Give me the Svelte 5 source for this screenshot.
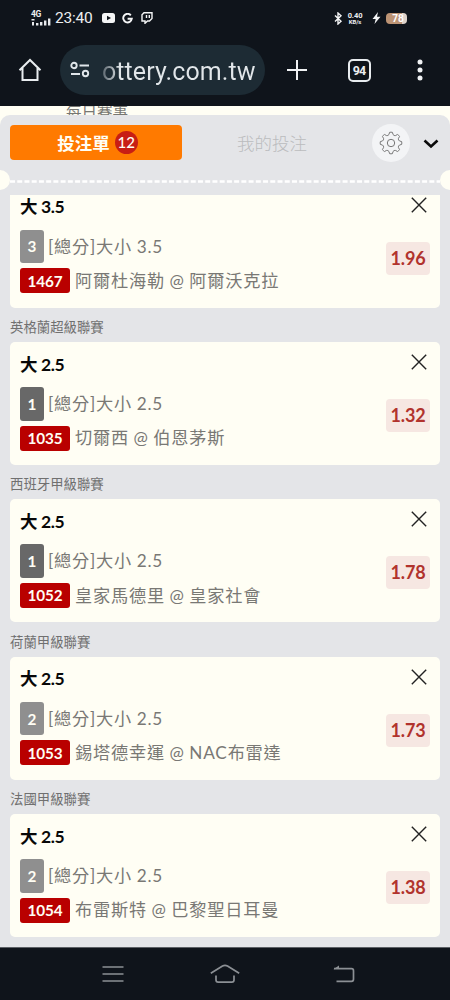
<script>
  const bets = [
    { league: "", pick: "3.5", tag: "3", id: "1467", teams: "阿爾杜海勒 @ 阿爾沃克拉", odds: "1.96" },
    { league: "英格蘭超級聯賽", pick: "2.5", tag: "1", id: "1035", teams: "切爾西 @ 伯恩茅斯", odds: "1.32" },
    { league: "西班牙甲級聯賽", pick: "2.5", tag: "1", id: "1052", teams: "皇家馬德里 @ 皇家社會", odds: "1.78" },
    { league: "荷蘭甲級聯賽", pick: "2.5", tag: "2", id: "1053", teams: "錫塔德幸運 @ NAC布雷達", odds: "1.73" },
    { league: "法國甲級聯賽", pick: "2.5", tag: "2", id: "1054", teams: "布雷斯特 @ 巴黎聖日耳曼", odds: "1.38" },
  ];

  // eight-toothed outline for the settings button
  const gear = Array.from({ length: 8 }, (_, i) => {
    const point = (r, deg) => {
      const a = ((i * 45 + deg) * Math.PI) / 180;
      return `${(12 + r * Math.sin(a)).toFixed(2)} ${(12 - r * Math.cos(a)).toFixed(2)}`;
    };
    return `${i ? "L" : "M"}${point(8.8, -13)}L${point(10.7, -8)}Q${point(11.1, 0)} ${point(10.7, 8)}L${point(8.8, 13)}Q${point(7.6, 22.5)} ${point(8.8, 32)}`;
  }).join("") + "Z";
</script>

<div class="screen">
  <header>
    <div class="status">
      <div class="signal">
        <span>4G</span>
        <svg width="20" height="8" viewBox="0 0 20 8" fill="#e8eaed">
          <path d="M.5 1h3v1.500h-3zM1 4h2v3.500H1zM5 5h2.400v2.500H5zM9 4h2.400v3.500H9zM13 2.500h2.400v5H13zM17 .5h2.400v7H17z" />
        </svg>
      </div>
      <span class="time">23:40</span>
      <svg class="yt" width="13" height="10" viewBox="0 0 13 10">
        <rect width="13" height="10" rx="2.500" fill="#f4f5f6" />
        <path d="M5 2.800 9 5 5 7.200z" fill="#0f141b" />
      </svg>
      <svg class="google" width="11" height="11" viewBox="0 0 11 11" fill="none" stroke="#f4f5f6" stroke-width="1.900">
        <path d="M8.800 2.300A4.300 4.300 0 1 0 9.800 5.700H5.600" />
      </svg>
      <svg class="twitch" width="12" height="12" viewBox="0 0 12 12" fill="none" stroke="#f4f5f6" stroke-width="1.400">
        <path d="M3 .8h8v5.700L8.500 9H6.500L4 11.300V9H1V2.800zM5.500 3v3M8.300 3v3" />
      </svg>
      <div class="status-right">
        <svg width="9" height="13" viewBox="0 0 9 13" fill="none" stroke="#f4f5f6" stroke-width="1.400">
          <path d="m1 3.500 6 5.800-3 2.700V1l3 2.700-6 5.800" />
        </svg>
        <div class="rate"><span>0.40</span><span>KB/s</span></div>
        <svg class="bolt" width="9" height="12" viewBox="0 0 9 12" fill="#f4f5f6">
          <path d="M6 0 .5 7h3.200L2.500 12 8.500 4.800H5z" />
        </svg>
        <span class="battery">78</span>
      </div>
    </div>
    <div class="toolbar">
      <svg class="home" width="24" height="24" viewBox="0 0 24 24" fill="none" stroke="#e8ecef" stroke-width="2">
        <path d="M1.500 12.300 12 2l10.500 10.300M4.500 10v12h15V10" />
      </svg>
      <div class="address">
        <svg width="20" height="18" viewBox="0 0 20 18" fill="none" stroke="#e0e6ea" stroke-width="1.900">
          <circle cx="4" cy="4.500" r="2.700" /><path d="M9.500 4.500H19M1 13h9" /><circle cx="15.500" cy="12.500" r="2.700" />
        </svg>
        <span class="url">ottery.com.tw</span>
      </div>
      <svg class="plus" width="20" height="20" viewBox="0 0 20 20" stroke="#f0f2f4" stroke-width="2">
        <path d="M10 0v20M0 10h20" />
      </svg>
      <span class="tabs-count">94</span>
      <svg class="dots" width="6" height="22" viewBox="0 0 6 22" fill="#f0f2f4">
        <circle cx="3" cy="3" r="2.500" /><circle cx="3" cy="11" r="2.500" /><circle cx="3" cy="19" r="2.500" />
      </svg>
    </div>
  </header>

  <div class="behind"><span>每日賽事</span></div>

  <main>
    <div class="panel-head">
      <button class="slip">投注單<span class="count">12</span></button>
      <button class="mine">我的投注</button>
      <button class="settings" aria-label="設定">
        <svg width="24" height="24" viewBox="0 0 24 24" fill="none" stroke="#777" stroke-width="1">
          <path d={gear} /><circle cx="12" cy="12" r="3.700" />
        </svg>
      </button>
      <svg class="chevron" width="16" height="10" viewBox="0 0 16 10" fill="none" stroke="#0b0b0b" stroke-width="2.600">
        <path d="m1.500 1.500 6.500 6 6.500-6" />
      </svg>
    </div>
    <div class="tear">
      <i class="notch"></i>
      <svg height="3" width="430"><line x1="0" x2="430" y1="1.500" y2="1.500" stroke="#fff" stroke-width="2.400" stroke-dasharray="5 2.230" /></svg>
      <i class="notch right"></i>
    </div>

    <div class="list">
      {#each bets as bet}
        {#if bet.league}
          <div class="league">{bet.league}</div>
        {/if}
        <section class="card">
          <div class="info">
            <h3>大 {bet.pick}</h3>
            <div class="row market"><b class="tag" class:dark={bet.tag === "1"}>{bet.tag}</b><span>[總分]大小 {bet.pick}</span></div>
            <div class="row match"><b class="code">{bet.id}</b><span>{bet.teams}</span></div>
          </div>
          <div class="side">
            <svg width="16" height="16" viewBox="0 0 16 16" stroke="#222" stroke-width="1.400">
              <path d="m.8.8 14.400 14.400m0-14.400L.8 15.200" />
            </svg>
            <span class="odds">{bet.odds}</span>
          </div>
        </section>
      {/each}
    </div>
  </main>

  <nav>
    <svg width="22" height="18" viewBox="0 0 22 18" stroke="#8c9095" stroke-width="1.700">
      <path d="M.5 2h21M.5 9h21M.5 16h21" />
    </svg>
    <svg class="nav-home" width="30" height="20" viewBox="0 0 30 20" fill="none" stroke="#8c9095" stroke-width="1.700">
      <path d="M.8 9.300 12.500 2Q15 .6 17.500 2l11.700 7.300M6 11.500V16q0 2.200 2.200 2.200h13.600q2.200 0 2.200-2.200v-4.500" />
    </svg>
    <svg class="nav-back" width="22" height="18" viewBox="0 0 22 18" fill="none" stroke="#8c9095" stroke-width="1.700">
      <path d="M1 3.700h17.500q2 0 2 2v8.600q0 2-2 2H3.500" /><path d="M.3 4.200 6 .6v3z" fill="#8c9095" stroke="none" />
    </svg>
  </nav>
</div>

<style>
  :global(body) {
    background: #0f141b;
  }
  .screen {
    width: 450px;
    height: 1000px;
    overflow: hidden;
    display: flex;
    flex-direction: column;
    font-family: Lato, "Noto Sans CJK TC", sans-serif;
    background: #fffef4;
  }
  svg {
    display: block;
    flex: none;
  }
  button {
    border: 0;
    padding: 0;
    font: inherit;
  }
  header {
    height: 106px;
    flex: none;
    background: #0f141b;
    color: #eceef0;
    font-family: Roboto, sans-serif;
  }
  .status {
    height: 36px;
    display: flex;
    align-items: center;
    padding: 0 43px 0 31px;
  }
  .signal {
    width: 20px;
    margin-right: 4px;
    font-size: 8.500px;
    line-height: 7px;
    font-weight: 700;
    letter-spacing: -0.3px;
  }
  .signal span {
    display: block;
  }
  .time {
    width: 38px;
    font-size: 15.500px;
    font-weight: 400;
    letter-spacing: -0.2px;
  }
  .yt {
    margin-left: 9px;
  }
  .google {
    margin-left: 7px;
  }
  .twitch {
    margin-left: 8px;
  }
  .status-right {
    margin-left: auto;
    display: flex;
    align-items: center;
  }
  .rate {
    width: 16px;
    margin-left: 4px;
    font-size: 7.500px;
    line-height: 7px;
    font-weight: 700;
    text-align: center;
    letter-spacing: -0.1px;
  }
  .rate span {
    display: block;
  }
  .rate span:last-child {
    font-size: 6px;
    line-height: 6px;
  }
  .bolt {
    margin: 0 5px 0 9px;
  }
  .battery {
    width: 21px;
    height: 11px;
    border-radius: 4px;
    background: linear-gradient(90deg, #bd9475 76%, #ddd2ca 76%);
    font-size: 10px;
    line-height: 11px;
    font-weight: 700;
    text-align: center;
    text-indent: 3px;
    color: #fff;
  }
  .toolbar {
    height: 68px;
    display: flex;
    align-items: center;
    padding-left: 18px;
  }
  .address {
    width: 205px;
    height: 50px;
    margin-left: 18px;
    border-radius: 25px;
    background: #1d2b34;
    box-sizing: border-box;
    padding-left: 10px;
    display: flex;
    align-items: center;
  }
  .url {
    margin: 2px 0 0 12px;
    font-size: 25px;
    letter-spacing: 0.080px;
    white-space: nowrap;
    background: linear-gradient(90deg, #59646c, #e2e7ea 18px);
    background-clip: text;
    color: transparent;
  }
  .plus {
    margin-left: 22px;
  }
  .tabs-count {
    width: 23px;
    height: 23px;
    box-sizing: border-box;
    margin-left: 41px;
    border: 2px solid #e8ecef;
    border-radius: 5px;
    font: 700 12.500px/19px "Roboto", sans-serif;
    letter-spacing: -0.8px;
    text-indent: -0.8px;
    text-align: center;
  }
  .dots {
    margin-left: 46px;
  }
  .behind {
    height: 9px;
    flex: none;
    overflow: hidden;
    padding-left: 66px;
    font-size: 15.500px;
    line-height: 14px;
    color: #777773;
  }
  .behind span {
    display: block;
    margin-top: -1px;
  }
  main {
    height: 832px;
    flex: none;
    overflow: hidden;
    background: #e4e5e8;
    border-radius: 10px 10px 0 0;
  }
  .panel-head {
    height: 55px;
    display: flex;
    align-items: center;
    padding-left: 10px;
  }
  .slip {
    width: 172px;
    height: 35px;
    border-radius: 4px;
    background: #ff7a00;
    color: #fffef4;
    font-size: 17.500px;
    font-weight: 700;
    display: flex;
    align-items: center;
    justify-content: center;
    padding-left: 3px;
    box-sizing: border-box;
  }
  .count {
    width: 23px;
    height: 23px;
    margin-left: 5px;
    border-radius: 50%;
    background: #c81e14;
    font-size: 15px;
    line-height: 23px;
    font-weight: 500;
  }
  .mine {
    width: 180px;
    background: none;
    color: #bbbcbe;
    font-size: 17.500px;
    font-weight: 300;
  }
  .settings {
    width: 38px;
    height: 38px;
    margin-left: 10px;
    border-radius: 50%;
    background: #f3f4f6;
    display: flex;
    align-items: center;
    justify-content: center;
  }
  .chevron {
    margin: 3px 0 0 13px;
  }
  .tear {
    height: 20px;
    display: flex;
    align-items: center;
  }
  .notch {
    width: 10px;
    height: 20px;
    flex: none;
    border-radius: 0 10px 10px 0;
    background: #fffef4;
  }
  .notch.right {
    border-radius: 10px 0 0 10px;
  }
  .tear svg {
    margin-top: 2px;
  }
  .list {
    height: 752px;
    margin-top: 5px;
    padding: 0 10px;
    overflow: hidden;
  }
  .league {
    height: 34.500px;
    box-sizing: border-box;
    padding-top: 10.500px;
    font-size: 13.400px;
    line-height: 18px;
    color: #707070;
  }
  .card {
    height: 122.900px;
    box-sizing: border-box;
    padding: 0 10px;
    border-radius: 5px;
    background: #fffef4;
    display: flex;
    justify-content: space-between;
  }
  .card:first-child {
    margin-top: -10.400px;
  }
  h3 {
    margin: 12.500px 0 12.500px;
    font-size: 17.500px;
    line-height: 20px;
    font-weight: 700;
    letter-spacing: -0.4px;
    color: #080808;
  }
  .row {
    display: flex;
    align-items: center;
    font-size: 17.200px;
    letter-spacing: 0.8px;
    word-spacing: -0.6px;
    color: #797874;
    font-weight: 400;
    white-space: nowrap;
  }
  .row span {
    margin-top: -2.500px;
  }
  .market {
    height: 33.500px;
    margin-bottom: 5px;
  }
  .market span {
    margin-left: -1px;
  }
  .match {
    height: 25px;
  }
  .row b {
    height: 100%;
    border-radius: 3px;
    margin-right: 5px;
    display: flex;
    align-items: center;
    justify-content: center;
    color: #fffef4;
    font-size: 15.300px;
    font-weight: 700;
    letter-spacing: -0.1px;
  }
  .tag {
    width: 24px;
    background: #8f8f8f;
  }
  .tag.dark {
    background: #686868;
  }
  .code {
    width: 50px;
    background: #b90000;
  }
  .side {
    display: flex;
    flex-direction: column;
    align-items: flex-end;
    padding-top: 12px;
  }
  .side svg {
    margin-right: 3px;
  }
  .odds {
    width: 44px;
    height: 33px;
    margin-top: 29px;
    border-radius: 4px;
    background: #f6e7e2;
    color: #b1332d;
    font-size: 18px;
    line-height: 33px;
    font-weight: 700;
    letter-spacing: -0.2px;
    text-align: center;
  }
  nav {
    flex: 1;
    border-top: 1px solid #5c6065;
    background: #0f141b;
    display: flex;
    align-items: center;
    padding-left: 102px;
  }
  .nav-home {
    margin-left: 86px;
  }
  .nav-back {
    margin-left: 93px;
  }
</style>
